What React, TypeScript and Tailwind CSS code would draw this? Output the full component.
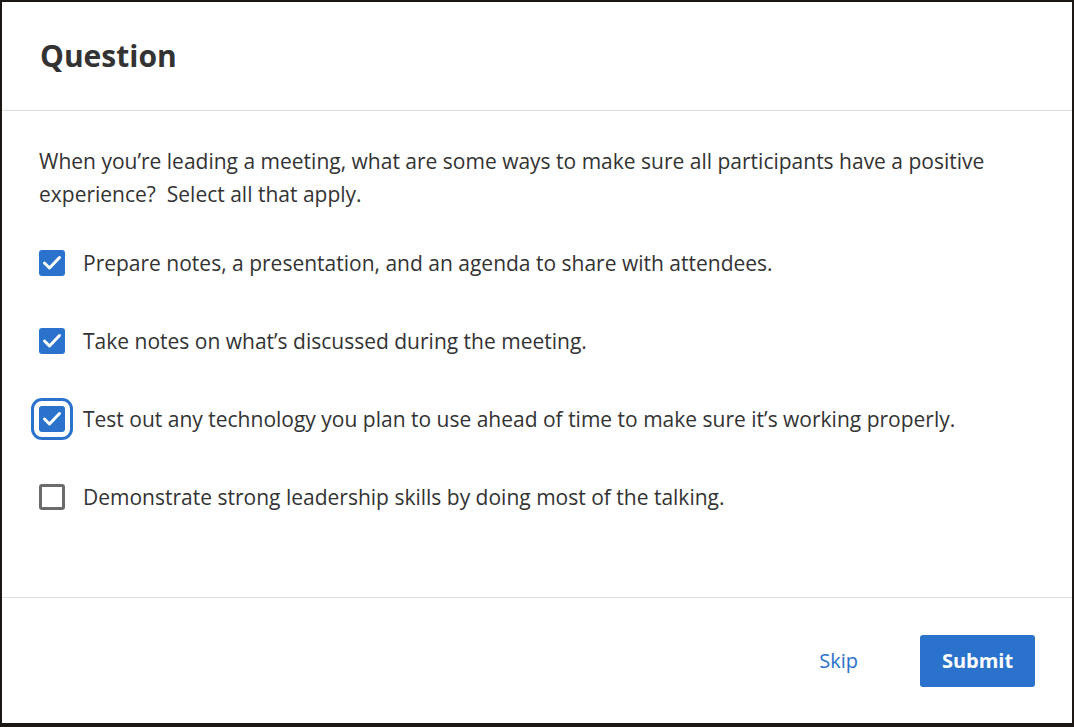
import { useState } from 'react'

const options = [
	{ text: 'Prepare notes, a presentation, and an agenda to share with attendees.', checked: true },
	{ text: 'Take notes on what’s discussed during the meeting.', checked: true },
	{ text: 'Test out any technology you plan to use ahead of time to make sure it’s working properly.', checked: true, focused: true },
	{ text: 'Demonstrate strong leadership skills by doing most of the talking.', checked: false }
]

function Checkbox({ checked, focused, onClick }: { checked: boolean; focused?: boolean; onClick: () => void }) {
	return (
		<button
			onClick={onClick}
			className={`shrink-0 w-[26px] h-[26px] rounded-[3px] flex items-center justify-center ${
				checked ? 'bg-[#2a72cc]' : 'bg-white border-[3px] border-[#6b6b6b]'
			} ${focused ? 'outline-3 outline-offset-[5px] outline-[#2a72cc]' : ''}`}
		>
			{checked && (
				<svg width="26" height="26" viewBox="0 0 26 26" fill="none">
					<polyline points="5.5,13 10.5,18 20.5,7.5" stroke="white" strokeWidth="3" strokeLinecap="round" strokeLinejoin="round" />
				</svg>
			)}
		</button>
	)
}

export default function App() {
	const [checks, setChecks] = useState(options.map((o) => o.checked))

	return (
		<div className="w-[1074px] h-[727px] bg-[#1b1714] pt-[2px] pl-[2px] pr-[2px] pb-[4px] font-['Open_Sans',sans-serif]">
			<div className="w-full h-full bg-white flex flex-col text-[#333333]">
				{/* header */}
				<div className="h-[109px] shrink-0 border-b border-[#dddddd] flex items-center px-[38px]">
					<h2 className="text-[30px] font-bold leading-none">Question</h2>
				</div>
				{/* body */}
				<div className="flex-1 px-[37px] pt-[34px]">
					<p className="text-[21px] leading-[33px] mb-[13px]">
						When you’re leading a meeting, what are some ways to make sure all participants have a positive experience?&nbsp; Select all that apply.
					</p>
					<ul>
						{options.map((opt, idx) => (
							<li key={idx} className="h-[78px] flex items-center gap-[18px]">
								<Checkbox
									checked={checks[idx]}
									focused={opt.focused}
									onClick={() => setChecks((prev) => prev.map((c, i) => (i === idx ? !c : c)))}
								/>
								<span className="text-[21px] leading-[28px]">{opt.text}</span>
							</li>
						))}
					</ul>
				</div>
				{/* footer */}
				<div className="h-[126px] shrink-0 border-t border-[#dddddd] flex items-center justify-end pr-[37px]">
					<button className="text-[20px] font-medium text-[#2a72cc] mr-[62px]">Skip</button>
					<button className="w-[115px] h-[52px] rounded-[3px] bg-[#2a72cc] text-white text-[20px] font-bold">Submit</button>
				</div>
			</div>
		</div>
	)
}
